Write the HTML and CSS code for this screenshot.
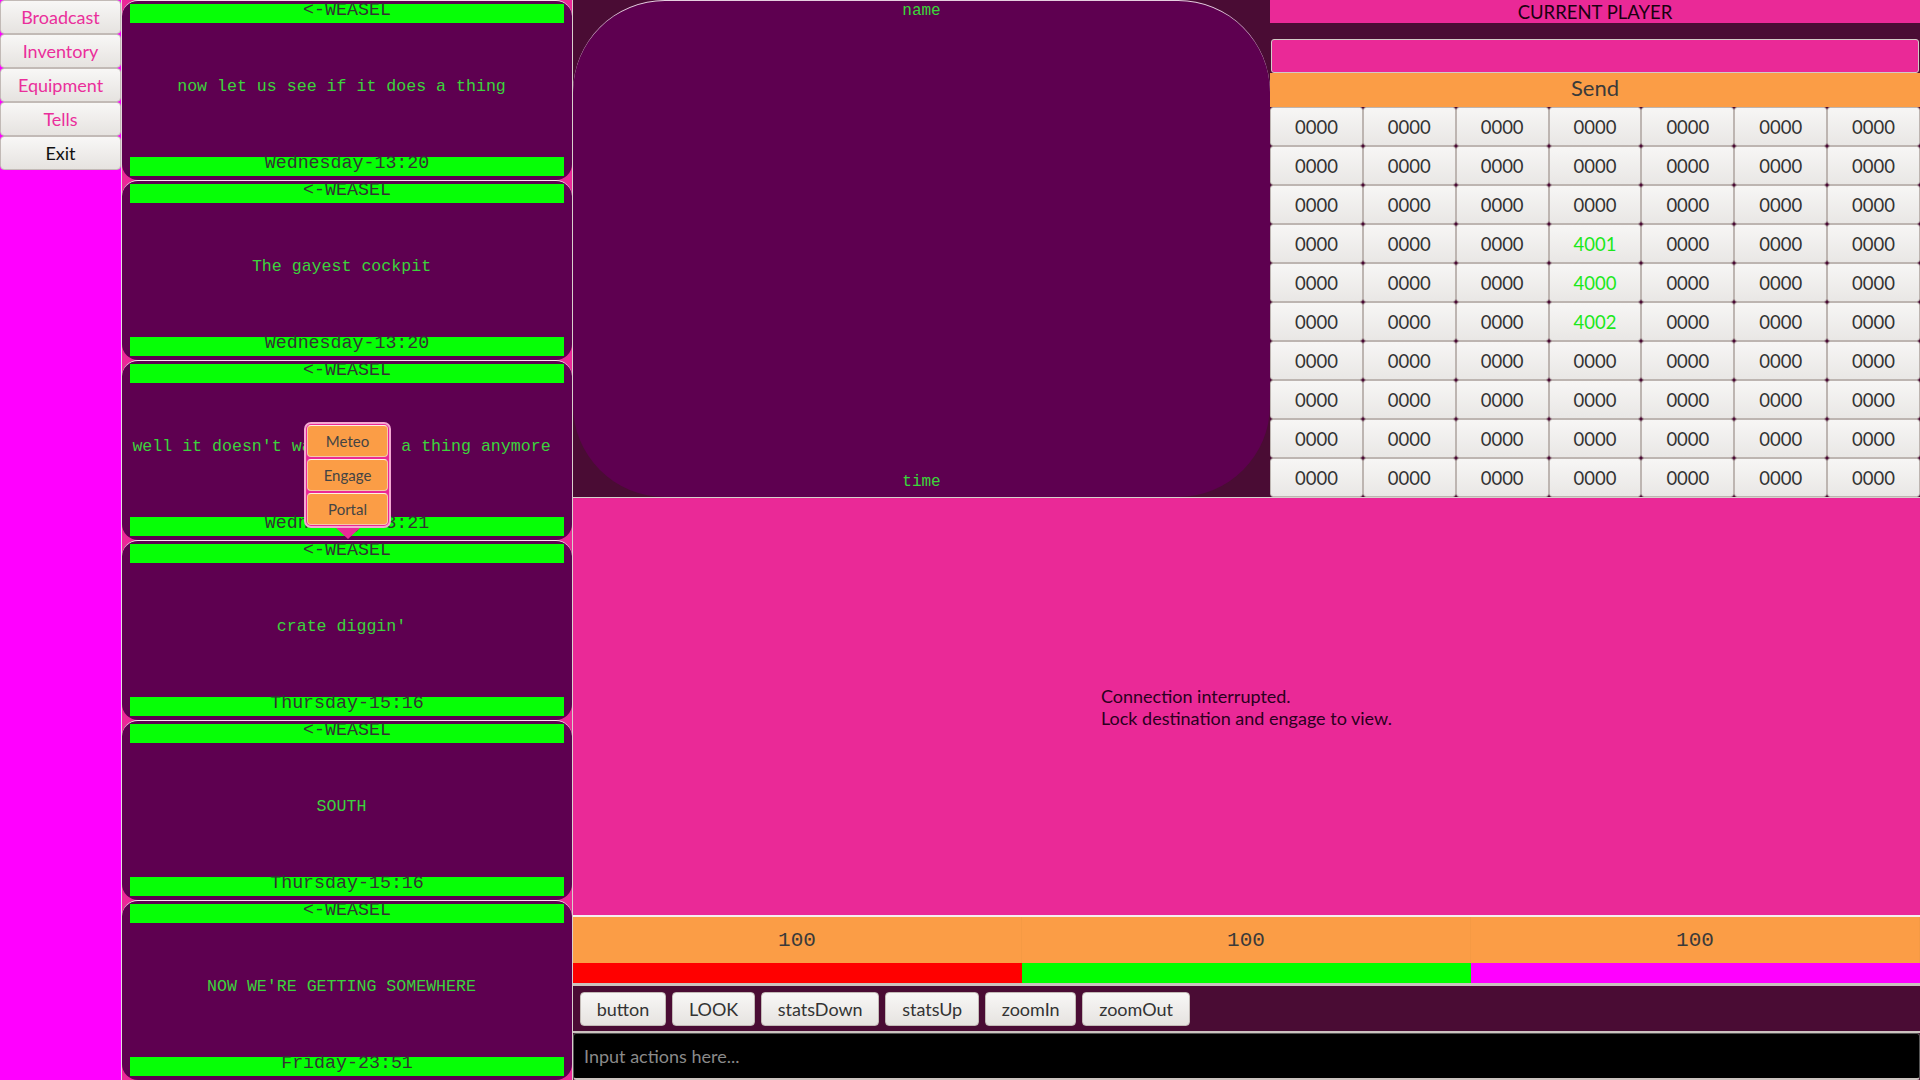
FILE: index.html
```html
<!DOCTYPE html>
<html>
<head>
<meta charset="utf-8">
<link rel="stylesheet" href="styles.css">
</head>
<body>
<div class="app">
  <nav class="sidebar">
    <button class="side-btn">Broadcast</button>
    <button class="side-btn">Inventory</button>
    <button class="side-btn">Equipment</button>
    <button class="side-btn">Tells</button>
    <button class="side-btn exit">Exit</button>
  </nav>

  <section class="messages">
    <div class="card">
      <div class="bar">&lt;-WEASEL</div>
      <div class="msg">now let us see if it does a thing</div>
      <div class="bar">Wednesday-13:20</div>
    </div>
    <div class="card">
      <div class="bar">&lt;-WEASEL</div>
      <div class="msg">The gayest cockpit</div>
      <div class="bar">Wednesday-13:20</div>
    </div>
    <div class="card">
      <div class="bar">&lt;-WEASEL</div>
      <div class="msg">well it doesn't want to do a thing anymore</div>
      <div class="bar">Wednesday-13:21</div>
    </div>
    <div class="card">
      <div class="bar">&lt;-WEASEL</div>
      <div class="msg">crate diggin'</div>
      <div class="bar">Thursday-15:16</div>
    </div>
    <div class="card">
      <div class="bar">&lt;-WEASEL</div>
      <div class="msg">SOUTH</div>
      <div class="bar">Thursday-15:16</div>
    </div>
    <div class="card">
      <div class="bar">&lt;-WEASEL</div>
      <div class="msg">NOW WE'RE GETTING SOMEWHERE</div>
      <div class="bar">Friday-23:51</div>
    </div>

    <div class="popup">
      <button class="pop-btn">Meteo</button>
      <button class="pop-btn">Engage</button>
      <button class="pop-btn">Portal</button>
    </div>
  </section>

  <main class="main">
    <div class="top">
      <div class="screen">
        <div class="panel">
          <div class="plabel">name</div>
          <div class="plabel">time</div>
        </div>
      </div>
      <div class="player">
        <div class="ptitle">CURRENT PLAYER</div>
        <div class="pspacer"></div>
        <div class="pinput"></div>
        <div class="send">Send</div>
        <div class="grid">
          <div class="cell">0000</div><div class="cell">0000</div><div class="cell">0000</div><div class="cell">0000</div><div class="cell">0000</div><div class="cell">0000</div><div class="cell">0000</div>
          <div class="cell">0000</div><div class="cell">0000</div><div class="cell">0000</div><div class="cell">0000</div><div class="cell">0000</div><div class="cell">0000</div><div class="cell">0000</div>
          <div class="cell">0000</div><div class="cell">0000</div><div class="cell">0000</div><div class="cell">0000</div><div class="cell">0000</div><div class="cell">0000</div><div class="cell">0000</div>
          <div class="cell">0000</div><div class="cell">0000</div><div class="cell">0000</div><div class="cell hl">4001</div><div class="cell">0000</div><div class="cell">0000</div><div class="cell">0000</div>
          <div class="cell">0000</div><div class="cell">0000</div><div class="cell">0000</div><div class="cell hl">4000</div><div class="cell">0000</div><div class="cell">0000</div><div class="cell">0000</div>
          <div class="cell">0000</div><div class="cell">0000</div><div class="cell">0000</div><div class="cell hl">4002</div><div class="cell">0000</div><div class="cell">0000</div><div class="cell">0000</div>
          <div class="cell">0000</div><div class="cell">0000</div><div class="cell">0000</div><div class="cell">0000</div><div class="cell">0000</div><div class="cell">0000</div><div class="cell">0000</div>
          <div class="cell">0000</div><div class="cell">0000</div><div class="cell">0000</div><div class="cell">0000</div><div class="cell">0000</div><div class="cell">0000</div><div class="cell">0000</div>
          <div class="cell">0000</div><div class="cell">0000</div><div class="cell">0000</div><div class="cell">0000</div><div class="cell">0000</div><div class="cell">0000</div><div class="cell">0000</div>
          <div class="cell">0000</div><div class="cell">0000</div><div class="cell">0000</div><div class="cell">0000</div><div class="cell">0000</div><div class="cell">0000</div><div class="cell">0000</div>
        </div>
      </div>
    </div>

    <div class="viewer">
      <p class="viewer-text">Connection interrupted.<br>Lock destination and engage to view.</p>
    </div>

    <div class="stats">
      <div class="stat">100</div>
      <div class="stat">100</div>
      <div class="stat">100</div>
    </div>
    <div class="bars">
      <div class="sbar red"></div>
      <div class="sbar green"></div>
      <div class="sbar magenta"></div>
    </div>

    <div class="actions">
      <button class="act-btn">button</button>
      <button class="act-btn">LOOK</button>
      <button class="act-btn">statsDown</button>
      <button class="act-btn">statsUp</button>
      <button class="act-btn">zoomIn</button>
      <button class="act-btn">zoomOut</button>
    </div>

    <div class="input-row">
      <input class="cmd" type="text" placeholder="Input actions here...">
    </div>
  </main>
</div>
</body>
</html>
```

FILE: styles.css
```css
* { box-sizing: border-box; }

html, body {
  margin: 0;
  padding: 0;
}

body {
  width: 1920px;
  height: 1080px;
  overflow: hidden;
  font-family: Lato, "Noto Sans", sans-serif;
  background: #4a0c34;
}

.app {
  display: flex;
  width: 1920px;
  height: 1080px;
}

/* ---------- sidebar ---------- */
.sidebar {
  width: 122px;
  flex: none;
  background: #ff00ff;
  border-right: 1px solid #e4d8dc;
  display: flex;
  flex-direction: column;
}

.side-btn {
  height: 34px;
  width: 100%;
  flex: none;
  padding: 0;
  border: 1px solid #c2bab6;
  border-radius: 4px;
  background: linear-gradient(#f8f7f6, #e6e3e0);
  font-family: Lato, "Noto Sans", sans-serif;
  font-size: 18px;
  color: #ea2f9b;
}

.side-btn.exit { color: #111; }

/* ---------- messages ---------- */
.messages {
  position: relative;
  width: 451px;
  flex: none;
  background: #ea2997;
  border-right: 1px solid #d8d0cc;
  display: flex;
  flex-direction: column;
}

.card {
  height: 180px;
  flex: none;
  background: #5e0050;
  border-radius: 16px;
  border-top: 1px solid #f6e6f0;
  padding: 3px 8px 4px;
  display: flex;
  flex-direction: column;
}

.bar {
  height: 19px;
  flex: none;
  background: #06ff06;
  font-family: "Liberation Mono", monospace;
  font-size: 18.3px;
  line-height: 13px;
  text-align: center;
  color: #333;
  white-space: pre;
}

.msg {
  flex: 1;
  display: flex;
  align-items: center;
  justify-content: center;
  padding: 0 11px 8px 0;
  font-family: "Liberation Mono", monospace;
  font-size: 16.6px;
  color: #3cd33c;
  white-space: pre;
}

/* popup menu */
.popup {
  position: absolute;
  left: 182px;
  top: 422px;
  width: 87px;
  background: #ea2997;
  border: 2px solid #f4a8d2;
  border-radius: 7px;
  padding: 1px 1px;
  display: flex;
  flex-direction: column;
  gap: 2px;
}

.popup::after {
  content: "";
  position: absolute;
  left: 50%;
  bottom: -13px;
  transform: translateX(-50%);
  border-left: 12px solid transparent;
  border-right: 12px solid transparent;
  border-top: 11px solid #ea2997;
}

.pop-btn {
  height: 32px;
  padding: 0;
  background: #fb9d46;
  border: 1px solid #f4c9a8;
  border-top-color: #fff1e2;
  border-radius: 4px;
  font-family: Lato, "Noto Sans", sans-serif;
  font-size: 15px;
  color: #444;
}

/* ---------- main ---------- */
.main {
  flex: 1;
  min-width: 0;
  display: flex;
  flex-direction: column;
}

.top {
  height: 498px;
  flex: none;
  display: flex;
  border-bottom: 1px solid #d8d0cc;
}

.screen {
  width: 697px;
  flex: none;
  background: #4a0c34;
  display: flex;
}

.panel {
  flex: 1;
  background: #5e0050;
  border-radius: 92px;
  border-top: 1px solid #e6cfe0;
  display: flex;
  flex-direction: column;
  justify-content: space-between;
  align-items: center;
  padding: 1px 0 6px;
}

.plabel {
  font-family: "Liberation Mono", monospace;
  font-size: 16px;
  line-height: 18px;
  color: #3ad83a;
}

.player {
  flex: 1;
  display: flex;
  flex-direction: column;
  background: #4a0c34;
}

.ptitle {
  height: 23px;
  flex: none;
  background: #ea2997;
  text-align: center;
  font-size: 18.5px;
  line-height: 24px;
  color: #1a0010;
}

.pspacer {
  height: 16px;
  flex: none;
}

.pinput {
  height: 34px;
  flex: none;
  margin: 0 1px;
  background: #ea2997;
  border: 1px solid #d2cac6;
  border-radius: 3px;
}

.send {
  height: 34px;
  flex: none;
  background: #fb9d46;
  text-align: center;
  font-size: 22px;
  line-height: 30px;
  color: #3a3a3a;
}

.grid {
  flex: 1;
  display: grid;
  grid-template-columns: repeat(7, 1fr);
  grid-auto-rows: 39px;
}

.cell {
  border: 1px solid #bdb5b1;
  border-radius: 3px;
  background: linear-gradient(#f7f6f5, #e9e7e5);
  display: flex;
  align-items: center;
  justify-content: center;
  font-size: 18.5px;
  color: #333;
}

.cell.hl { color: #1be81b; }

/* viewer */
.viewer {
  flex: 1;
  background: #ea2997;
  display: flex;
  align-items: center;
  justify-content: center;
}

.viewer-text {
  margin: 0;
  font-size: 18px;
  line-height: 22px;
  color: #2a0020;
}

/* stats */
.stats {
  height: 48px;
  flex: none;
  border-top: 2px solid #f6eeee;
  background: #fb9d46;
  display: flex;
}

.stat {
  flex: 1;
  display: flex;
  align-items: center;
  justify-content: center;
  font-family: "Liberation Mono", monospace;
  font-size: 21px;
  color: #3a3a3a;
  border-right: 1px solid #f59a44;
}

.bars {
  height: 20px;
  flex: none;
  display: flex;
}

.sbar { flex: 1; }
.sbar.red { background: #ff0000; }
.sbar.green { background: #00ff00; }
.sbar.magenta { background: #ff00ff; }

/* actions */
.actions {
  height: 48px;
  flex: none;
  border-top: 3px solid #cbc3bf;
  background: #4a0c34;
  display: flex;
  align-items: flex-start;
  gap: 6px;
  padding: 6px 7px;
}

.act-btn {
  height: 34px;
  padding: 0 15.75px;
  border: 1px solid #c2bab6;
  border-radius: 4px;
  background: linear-gradient(#f8f7f6, #e6e3e0);
  font-family: Lato, "Noto Sans", sans-serif;
  font-size: 18px;
  color: #333;
}

.input-row {
  height: 49px;
  flex: none;
  border-top: 2px solid #cbc3bf;
  display: flex;
}

.cmd {
  flex: 1;
  height: 47px;
  margin: 0;
  background: #000;
  border: 1px solid #555;
  border-bottom: 2px solid #cbc3bf;
  border-radius: 3px;
  padding: 0 10px;
  font-family: Lato, "Noto Sans", sans-serif;
  font-size: 18px;
  color: #ddd;
  outline: none;
}

.cmd::placeholder { color: #8a8a8a; }
```
